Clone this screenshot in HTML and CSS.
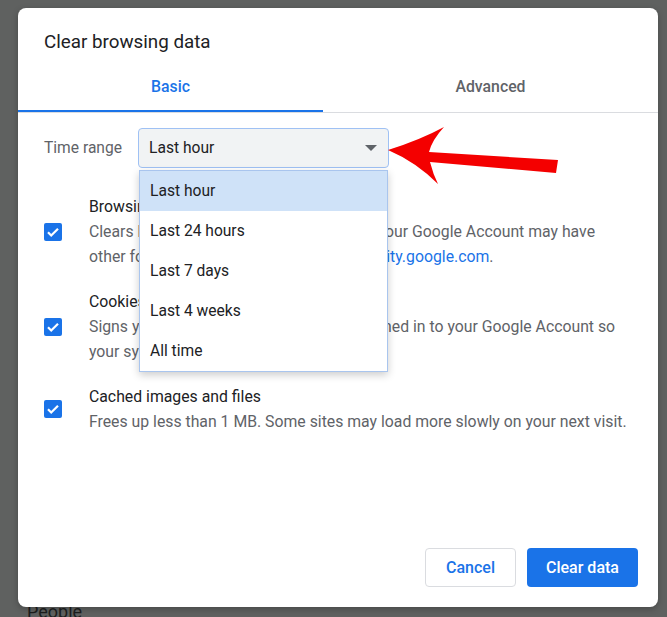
FILE: index.html
```html
<!DOCTYPE html>
<html lang="en">
<head>
    <meta charset="UTF-8">
    <meta name="viewport" content="width=device-width, initial-scale=1.0">
    <title>Clear browsing data</title>
    <link rel="stylesheet" href="styles.css">
</head>
<body>
    <div class="page">
        <div class="dialog">
            <h2 class="dialog-title">Clear browsing data</h2>

            <div class="tabs">
                <div class="tab active">Basic</div>
                <div class="tab">Advanced</div>
            </div>

            <div class="time-range">
                <span class="time-label">Time range</span>
                <div class="select-wrap">
                    <div class="select">
                        <span>Last hour</span>
                        <span class="caret"></span>
                    </div>
                    <!-- open dropdown -->
                    <ul class="menu">
                        <li class="selected">Last hour</li>
                        <li>Last 24 hours</li>
                        <li>Last 7 days</li>
                        <li>Last 4 weeks</li>
                        <li>All time</li>
                    </ul>
                </div>
            </div>

            <div class="options">
                <div class="option">
                    <span class="checkbox">
                        <svg viewBox="0 0 18 18" width="18" height="18"><path d="M4 9.3l3.2 3.2L14 5.7" fill="none" stroke="#fff" stroke-width="2.2"/></svg>
                    </span>
                    <div class="option-text">
                        <div class="option-title">Browsing history</div>
                        <div class="option-desc">Clears history from all signed-in devices. Your Google Account may have other forms of browsing history at <a href="#">myactivity.google.com</a>.</div>
                    </div>
                </div>

                <div class="option">
                    <span class="checkbox">
                        <svg viewBox="0 0 18 18" width="18" height="18"><path d="M4 9.3l3.2 3.2L14 5.7" fill="none" stroke="#fff" stroke-width="2.2"/></svg>
                    </span>
                    <div class="option-text">
                        <div class="option-title">Cookies and other site data</div>
                        <div class="option-desc">Signs you out of most sites. You'll stay signed in to your Google Account so your synced data can be cleared.</div>
                    </div>
                </div>

                <div class="option">
                    <span class="checkbox">
                        <svg viewBox="0 0 18 18" width="18" height="18"><path d="M4 9.3l3.2 3.2L14 5.7" fill="none" stroke="#fff" stroke-width="2.2"/></svg>
                    </span>
                    <div class="option-text">
                        <div class="option-title">Cached images and files</div>
                        <div class="option-desc">Frees up less than 1 MB. Some sites may load more slowly on your next visit.</div>
                    </div>
                </div>
            </div>

            <div class="buttons">
                <button class="btn-cancel">Cancel</button>
                <button class="btn-clear">Clear data</button>
            </div>
        </div>

        <div class="behind">People</div>
    </div>

    <!-- red annotation arrow -->
    <svg class="arrow" viewBox="0 0 667 617" width="667" height="617">
        <path d="M388 150 Q420 140 444 127 Q432 140 429 152 L558 160 L556 173 L430 162 Q433 174 438 184 Q416 162 388 150 Z" fill="#f40000"/>
    </svg>
</body>
</html>
```

FILE: styles.css
```css
* {
    margin: 0;
    padding: 0;
    box-sizing: border-box;
}

body {
    width: 667px;
    height: 617px;
    overflow: hidden;
    background: #5f6160;
    font-family: Roboto, 'Noto Sans', sans-serif;
    color: #202124;
}

.page {
    padding: 8px 9px 0 18px;
}

.dialog {
    position: relative;
    z-index: 1;
    width: 640px;
    height: 599px;
    background: #ffffff;
    border-radius: 8px;
    box-shadow: 0 2px 6px rgba(0, 0, 0, 0.25);
    display: flex;
    flex-direction: column;
}

.dialog-title {
    font-size: 18.8px;
    font-weight: normal;
    line-height: 20px;
    padding: 24px 26px 0;
}

.tabs {
    display: flex;
    margin-top: 11px;
    border-bottom: 1px solid #dadce0;
}

.tab {
    flex: 1;
    height: 49px;
    line-height: 47px;
    text-align: center;
    font-size: 15.8px;
    font-weight: 500;
    color: #5f6368;
    border-bottom: 2px solid transparent;
}

.tab.active {
    flex: none;
    width: 305px;
    color: #1a73e8;
    border-bottom-color: #1a73e8;
}

.time-range {
    display: flex;
    align-items: center;
    margin-top: 15px;
    padding-left: 26px;
}

.time-label {
    width: 94px;
    font-size: 15.6px;
    color: #5f6368;
}

.select-wrap {
    position: relative;
}

.select {
    width: 251px;
    height: 40px;
    display: flex;
    align-items: center;
    justify-content: space-between;
    padding: 0 11px 0 10px;
    background: #f1f3f4;
    border: 1px solid #9fc1f4;
    border-radius: 4px;
    font-size: 15.6px;
}

.caret {
    width: 0;
    height: 0;
    border-left: 6px solid transparent;
    border-right: 6px solid transparent;
    border-top: 6px solid #5f6368;
}

.menu {
    position: absolute;
    z-index: 2;
    top: 42px;
    left: 1px;
    width: 249px;
    list-style: none;
    background: #ffffff;
    border: 1px solid #a9c5ee;
    box-shadow: 0 3px 8px rgba(0, 0, 0, 0.2);
}

.menu li {
    height: 40px;
    line-height: 40px;
    padding-left: 10px;
    font-size: 15.6px;
}

.menu li.selected {
    background: #cfe2f8;
}

.options {
    margin-top: 26px;
    padding: 0 26px;
    display: flex;
    flex-direction: column;
    gap: 20px;
}

.option {
    display: flex;
    align-items: center;
}

.checkbox {
    flex: none;
    width: 18px;
    height: 18px;
    border-radius: 2px;
    background: #1a73e8;
    margin-right: 27px;
}

.checkbox svg {
    display: block;
}

.option-text {
    max-width: 542px;
    font-size: 15.8px;
    line-height: 25px;
}

.option-desc {
    color: #5f6368;
}

.option-desc a {
    color: #1a73e8;
    text-decoration: none;
}

.buttons {
    margin-top: auto;
    display: flex;
    justify-content: flex-end;
    gap: 11px;
    padding: 0 20px 20px;
}

.buttons button {
    height: 39px;
    border-radius: 4px;
    font-family: Roboto, sans-serif;
    font-size: 16px;
    font-weight: 500;
}

.btn-cancel {
    width: 91px;
    background: #ffffff;
    color: #1a73e8;
    border: 1px solid #dadce0;
}

.btn-clear {
    width: 111px;
    background: #1a73e8;
    color: #ffffff;
    border: none;
}

.behind {
    margin-top: -5px;
    padding-left: 9px;
    font-size: 18px;
    line-height: 20px;
    color: #1d1f1e;
}

.arrow {
    position: absolute;
    top: 0;
    left: 0;
    z-index: 3;
    pointer-events: none;
}
```
